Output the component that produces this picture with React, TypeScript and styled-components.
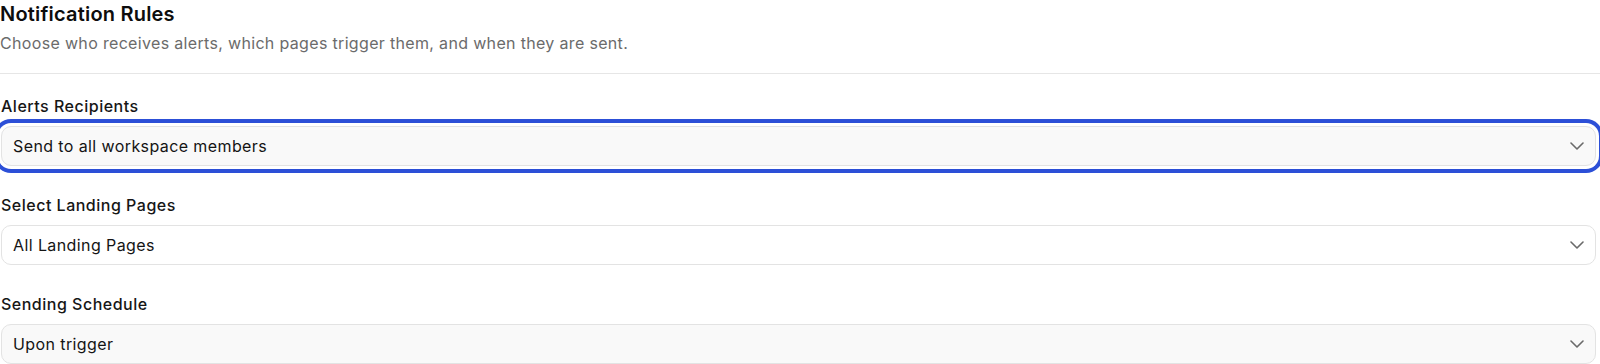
import * as React from 'react';
import styled, { createGlobalStyle } from 'styled-components';

const GlobalStyle = createGlobalStyle`
  html, body {
    margin: 0;
    padding: 0;
    background: #ffffff;
  }
  body {
    font-family: Inter, "Noto Sans", "Liberation Sans", sans-serif;
    color: #111111;
    -webkit-font-smoothing: antialiased;
  }
`;

const Page = styled.div`
  display: flex;
  flex-direction: column;
  width: 1595px;
  padding: 2px 0 0 1px;
`;

const Header = styled.header`
  display: flex;
  flex-direction: column;
  gap: 5px;
  padding-bottom: 18px;
  border-bottom: 1px solid #e6e6e6;
  margin-right: -6px;
  margin-left: -1px;
`;

const Title = styled.h2`
  margin: 0;
  font-size: 20px;
  line-height: 24px;
  font-weight: 600;
  letter-spacing: 0.2px;
  color: #0d0d0d;
`;

const Subtitle = styled.p`
  margin: 0;
  font-size: 16px;
  line-height: 24px;
  letter-spacing: 0.33px;
  color: #6b6b6b;
`;

const Fields = styled.div`
  display: flex;
  flex-direction: column;
  gap: 28px;
  padding-top: 21px;
`;

const Field = styled.div`
  display: flex;
  flex-direction: column;
  gap: 9px;
`;

const Label = styled.label`
  font-size: 16px;
  line-height: 22px;
  font-weight: 500;
  letter-spacing: 0.5px;
  color: #161616;
`;

const SelectBox = styled.div<{ $focused?: boolean; $bg?: string }>`
  display: flex;
  align-items: center;
  justify-content: space-between;
  height: 40px;
  box-sizing: border-box;
  padding: 0 11px 0 11px;
  border: 1px solid #e3e3e3;
  border-radius: 10px;
  background: ${(p) => p.$bg ?? '#fafafa'};
  font-size: 16px;
  letter-spacing: 0.4px;
  color: #141414;
  cursor: pointer;
  box-shadow: ${(p) =>
    p.$focused ? '0 0 0 3px #ffffff, 0 0 0 7px #2c4fd7' : 'none'};
`;

const Chevron = () => (
  <svg width="14" height="8" viewBox="0 0 14 8" fill="none" stroke="#6a6a6a" strokeWidth="1.6" strokeLinecap="round" strokeLinejoin="round">
    <path d="M1 1l6 6 6-6" />
  </svg>
);

const fields = [
  { label: 'Alerts Recipients', value: 'Send to all workspace members', focused: true, bg: '#f9f9f9' },
  { label: 'Select Landing Pages', value: 'All Landing Pages', focused: false, bg: '#ffffff' },
  { label: 'Sending Schedule', value: 'Upon trigger', focused: false, bg: '#f9f9f9' },
];

export default function App() {
  return (
    <>
      <GlobalStyle />
      <Page>
        <Header>
          <Title>Notification Rules</Title>
          <Subtitle>Choose who receives alerts, which pages trigger them, and when they are sent.</Subtitle>
        </Header>
        <Fields>
          {fields.map((f) => (
            <Field key={f.label}>
              <Label>{f.label}</Label>
              <SelectBox $focused={f.focused} $bg={f.bg} role="combobox">
                <span>{f.value}</span>
                <Chevron />
              </SelectBox>
            </Field>
          ))}
        </Fields>
      </Page>
    </>
  );
}
